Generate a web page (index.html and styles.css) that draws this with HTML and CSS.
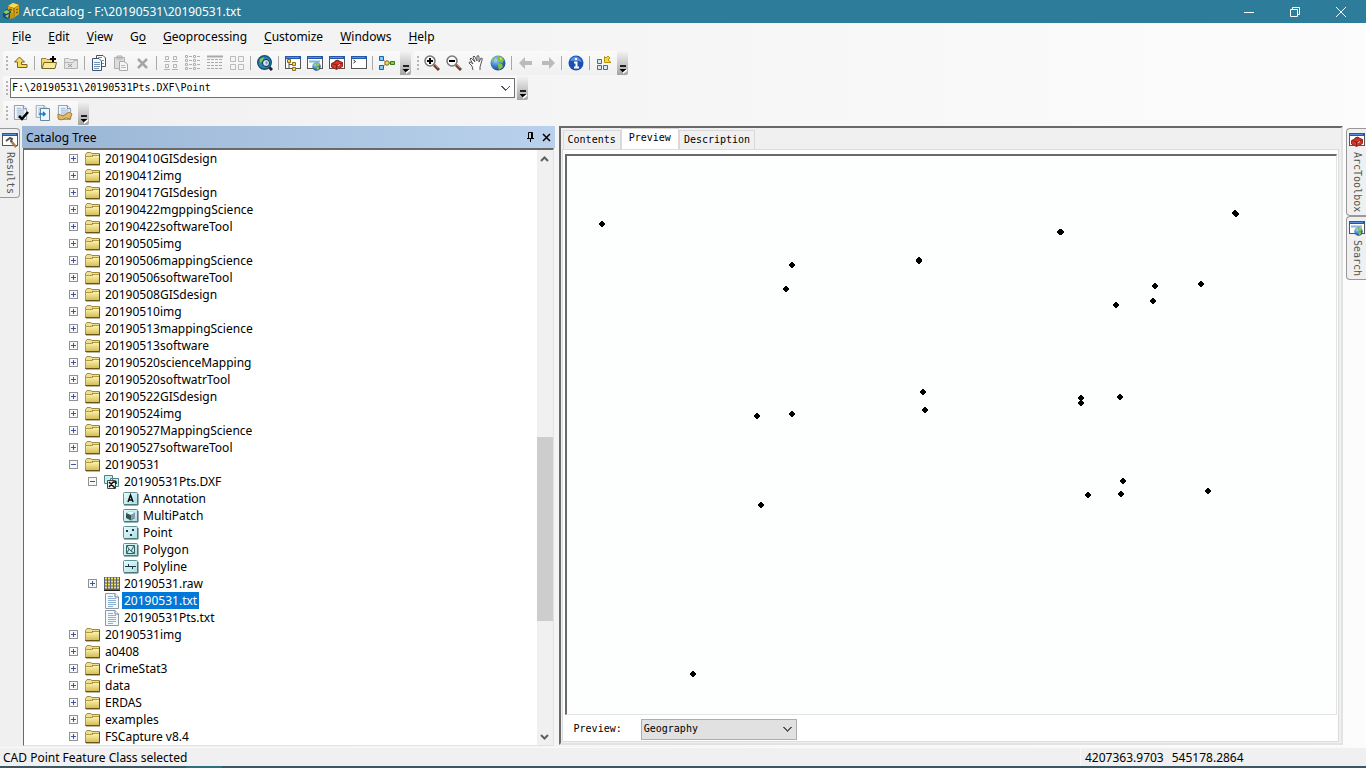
FILE: index.html
```html
<!DOCTYPE html>
<html lang="en">
<head>
<meta charset="utf-8">
<title>ArcCatalog - F:\20190531\20190531.txt</title>
<link rel="stylesheet" href="styles.css">
</head>
<body>
<svg class="defs" aria-hidden="true">
  <defs>
    <linearGradient id="g-folder" x1="0" y1="0" x2="0" y2="1"><stop offset="0" stop-color="#fff6b0"/><stop offset="1" stop-color="#d3bb55"/></linearGradient>
    <linearGradient id="g-cad" x1="0" y1="0" x2="1" y2="1"><stop offset="0" stop-color="#e9fcfd"/><stop offset="1" stop-color="#a9dfe4"/></linearGradient>
    <radialGradient id="g-globe" cx=".35" cy=".3" r=".8"><stop offset="0" stop-color="#a9d4ff"/><stop offset=".5" stop-color="#3f7fd0"/><stop offset="1" stop-color="#123a80"/></radialGradient>
    <symbol id="folder" viewBox="0 0 16 14"><path d="M.5 2.500L2 .5H5.500L7 1.500H14.500V12.500H.5z" fill="#efdf94" stroke="#a18a38"/><path d="M7 3.500H14" stroke="#8d7630"/><path d="M.5 4.500H7.500L8.500 3.500H14.500V12.500H.5z" fill="url(#g-folder)" stroke="#b09a48"/><path d="M.5 12.500H14.500V2" fill="none" stroke="#665418"/><path d="M1 13.500H15" stroke="#bdb9a8"/></symbol>
    <symbol id="plus" viewBox="0 0 9 9"><rect x=".5" y=".5" width="8" height="8" fill="#f8f8f8" stroke="#919191"/><path d="M2 4.500H7M4.500 2V7" stroke="#3b57a5"/></symbol>
    <symbol id="minus" viewBox="0 0 9 9"><rect x=".5" y=".5" width="8" height="8" fill="#f8f8f8" stroke="#919191"/><path d="M2 4.500H7" stroke="#3b57a5"/></symbol>
    <symbol id="cadbox" viewBox="0 0 16 14"><rect x=".5" y=".5" width="14" height="12" rx="1" fill="url(#g-cad)" stroke="#5f9196"/><path d="M1 13H15V2" fill="none" stroke="#376367"/></symbol>
    <symbol id="doc" viewBox="0 0 16 16"><path d="M1.500.5H11L14.500 4V15.500H1.500z" fill="#f3f8fd" stroke="#8d99a5"/><path d="M11 .5V4H14.500" fill="#fff" stroke="#717d88"/><path d="M4 3.500H9M4 5.500H12M4 7.500H12M4 9.500H12M4 11.500H12M4 13.500H9" stroke="#8eb1d2"/></symbol>
    <symbol id="window" viewBox="0 0 16 16"><rect x=".5" y="1.500" width="15" height="12" fill="#fff" stroke="#555"/><path d="M0 2.500H16" stroke="#2459aa" stroke-width="3"/><path d="M1 2.500H14" stroke="#5b8ed8"/></symbol>
    <symbol id="toolbox" viewBox="0 0 16 16"><use href="#window"/><path d="M2.500 8.500L9 5.500 13.500 7.500V11.500L7.500 14.500 2.500 12z" fill="#d93529" stroke="#a3241c"/><path d="M3 8.500L7.500 10 13.500 8M7.500 10V14" stroke="#84231b" fill="none"/><path d="M6 7.500V6L9 5 10 6.500" fill="none" stroke="#722"/><path d="M9 10l2-1v1l-2 1z" fill="#f4d0c0"/></symbol>
    <symbol id="globe" viewBox="0 0 16 16"><circle cx="8" cy="8" r="7.500" fill="url(#g-globe)"/><path d="M8 1L12 2 14 5 12 8 8 6 7 4zM8 8L12 9 13 12 9 15 8 11zM2 4L5 2 4 5 2 7z" fill="#83c43c"/><path d="M10 2L12 4 10 5" fill="#e2e66c"/></symbol>
    <symbol id="searchwin" viewBox="0 0 16 16"><use href="#window"/><path d="M2 6.500H13" stroke="#83b5d7" stroke-width="2"/><use href="#globe" x="5" y="7" width="9" height="9"/></symbol>
    <symbol id="overflow" viewBox="0 0 10 24"><path d="M2 14H8V16H2z" fill="#222"/><path d="M1.500 18H8.500L5 21.500z" fill="#000"/><path d="M5 21L9 18V20L5 23z" fill="#fff"/></symbol>
    <symbol id="mag" viewBox="0 0 16 16"><path d="M10 10L15 15" stroke="#6e4030" stroke-width="3"/><path d="M10 9L14 13" stroke="#b98270"/><circle cx="6" cy="6" r="5" fill="#f8f8f8" stroke="#777" stroke-width="1.500"/></symbol>
    <path id="pt" d="M2 0H4V1H5V2H6V4H5V5H4V6H2V5H1V4H0V2H1V1H2z"/>
  </defs>
</svg>
<div class="app">
<header class="title">
  <svg width="18" height="18" viewBox="0 0 18 18"><path d="M6 3L11 0 17 2V11L12 15 6 12z" fill="#d8a912"/><path d="M6 3L12 5 17 2M12 5V14" stroke="#806009" fill="none"/><path d="M11 0L17 2 12 5 6 3z" fill="#f8dc54"/><path d="M7 6L10 7M14 7L16 6M14 10L16 9" stroke="#5d4504"/><path d="M1 9L5 6 9 8V14L5 16 1 14z" fill="#174b75"/><path d="M1 9L5 7 8 9 4 11zM3 13L7 11 6 15z" fill="#8fcb6a"/><path d="M8 10H12V15L8 16z" fill="#c8960d"/></svg>
  <h1>ArcCatalog - F:\20190531\20190531.txt</h1>
  <div class="winbtns">
    <button aria-label="Minimize"><svg width="12" height="12"><path d="M1 6.500H11" stroke="#fff"/></svg></button>
    <button aria-label="Restore"><svg width="12" height="12"><path d="M1.500 3.500H8.500V10.500H1.500zM3.500 3V1.500H10.500V8.500H9" fill="none" stroke="#fff"/></svg></button>
    <button aria-label="Close"><svg width="12" height="12"><path d="M1 1L11 11M11 1L1 11" stroke="#fff"/></svg></button>
  </div>
</header>
<nav class="menu">
  <button><u>F</u>ile</button><button><u>E</u>dit</button><button><u>V</u>iew</button><button>G<u>o</u></button><button><u>G</u>eoprocessing</button><button><u>C</u>ustomize</button><button><u>W</u>indows</button><button><u>H</u>elp</button>
</nav>
<div class="bars">
<div class="bar">
  <div class="strip">
    <i class="grip"></i>
    <button aria-label="Up One Level"><svg><path d="M6.500 2L1.500 7H4.500V12.500H14V9.500H8.500V7H11.500z" fill="#f4da5d" stroke="#7c6518"/></svg></button><i class="sep"></i>
    <button aria-label="Connect To Folder"><svg><path d="M.5 3.500H5L6 4.500H12V13H.5z" fill="#f0dc77" stroke="#9c842e"/><path d="M1 13.500L3 7.500H15.500L14 13.500z" fill="#f7eaa0" stroke="#77621c"/><path d="M9 4H15M12 1V7" stroke="#000" stroke-width="2"/></svg></button>
    <button disabled aria-label="Disconnect Folder"><svg><path d="M1.500 3.500H6L7 4.500H14.500V13.500H1.500zM1.500 7.500H10L11 5.500H14" fill="#e5e5e5" stroke="#b4b4b4"/><path d="M5 9L9 12M9 9L5 12" stroke="#999"/></svg></button><i class="sep"></i>
    <button aria-label="Copy"><svg><path d="M5.500.5H12L14.500 3V11.500H5.500z" fill="#fff" stroke="#3e5369"/><path d="M1.500 3.500H8L10.500 6V15.500H1.500z" fill="#f5faff" stroke="#3e5369"/><path d="M3 7.500H9M3 9.500H9M3 11.500H9M3 13.500H8M7 2.500H11M11 5.500H13M11 8.500H13" stroke="#6f93b6"/></svg></button>
    <button disabled aria-label="Paste"><svg><path d="M1.500 2.500H11.500V13.500H1.500zM4 1H9V4H4z" fill="#ddd" stroke="#b0b0b0"/><path d="M6.500 6.500H11L14.500 9V15.500H6.500z" fill="#f4f4f4" stroke="#aaa"/><path d="M8 10.500H12M8 12.500H13" stroke="#bbb"/></svg></button>
    <button disabled aria-label="Delete"><svg><path d="M3 4L12 13M12 4L3 13" stroke="#a5a5a5" stroke-width="2.500"/></svg></button><i class="sep"></i>
    <button disabled aria-label="Large Icons"><svg><path d="M2.500 1.500H5.500V4.500H2.500zM10.500 1.500H13.500V4.500H10.500zM2.500 9.500H5.500V12.500H2.500zM10.500 9.500H13.500V12.500H10.500zM1 6.500H7M9 6.500H15M1 14.500H7M9 14.500H15" fill="none" stroke="#b4b4b4"/></svg></button>
    <button disabled aria-label="List"><svg><path d="M.5.5H2.500V2.500H.5zM8.500.5H10.500V2.500H8.500zM.5 4.500H2.500V6.500H.5zM8.500 4.500H10.500V6.500H8.500zM.5 8.500H2.500V10.500H.5zM8.500 8.500H10.500V10.500H8.500zM.5 12.500H2.500V14.500H.5zM8.500 12.500H10.500V14.500H8.500zM4 1.500H7M12 1.500H15M4 5.500H7M12 5.500H15M4 9.500H7M12 9.500H15M4 13.500H7M12 13.500H15" fill="none" stroke="#b0b0b0"/></svg></button>
    <button disabled aria-label="Details"><svg><path d="M0 1.500H16" stroke="#aaa" stroke-width="2"/><path d="M0 4.500H16M0 7.500H16M0 10.500H16M0 13.500H16" stroke="#aaa" stroke-dasharray="3 1"/></svg></button>
    <button disabled aria-label="Thumbnails"><svg><path d="M1.500 1.500H6.500V6.500H1.500zM9.500 1.500H14.500V6.500H9.500zM1.500 9.500H6.500V14.500H1.500zM9.500 9.500H14.500V14.500H9.500z" fill="#f4f4f4" stroke="#bbb"/></svg></button><i class="sep"></i>
    <button aria-label="Launch ArcMap"><svg><path d="M10 10L15 15" stroke="#222" stroke-width="3"/><circle cx="7.500" cy="7.500" r="6.800" fill="#2884b5" stroke="#135276" stroke-width="1.400"/><circle cx="9" cy="8" r="3.500" fill="#d9eef5" stroke="#124"/><path d="M3 4L7 2 6 5 3 8z" fill="#8fc84a"/><path d="M8 7L10 6 11 8 9 10z" fill="#6aa8c8"/></svg></button><i class="sep"></i>
    <button aria-label="Catalog Tree"><svg><use href="#window" width="16" height="16"/><path d="M4 5V13M4 9.500H9M4 13.500H9" stroke="#555" fill="none"/><path d="M2.500 4.500H5.500V7.500H2.500zM7.500 7.500H10.500V10.500H7.500zM7.500 12.500H10.500V15.500H7.500z" fill="#f6d64c" stroke="#8b711e"/></svg></button>
    <button aria-label="Search Window"><svg><use href="#searchwin" width="16" height="16"/></svg></button>
    <button aria-label="ArcToolbox Window"><svg><use href="#toolbox" width="16" height="16"/></svg></button>
    <button aria-label="Python Window"><svg><use href="#window" width="16" height="16"/><path d="M2.500 5L4.500 6.500 2.500 8" fill="none" stroke="#222"/></svg></button><i class="sep"></i>
    <button aria-label="ModelBuilder"><svg><path d="M3 4L8 8 3 12M8 8H13" stroke="#777" fill="none"/><path d="M.5 1.500H4.500V5.500H.5zM.5 10.500H4.500V14.500H.5z" fill="#82c8f4" stroke="#1763a7"/><circle cx="8" cy="8" r="2.200" fill="#f8d549" stroke="#856619"/><path d="M11.500 6.500H15.500V9.500H11.500z" fill="#82d44c" stroke="#2e7c20"/></svg></button>
    <button class="more" aria-label="Toolbar Options"><svg><use href="#overflow"/></svg></button>
  </div>
  <div class="strip">
    <i class="grip"></i>
    <button aria-label="Zoom In"><svg><use href="#mag" width="16" height="16"/><path d="M3 6H9M6 3V9" stroke="#000" stroke-width="2"/></svg></button>
    <button aria-label="Zoom Out"><svg><use href="#mag" width="16" height="16"/><path d="M3 6H9" stroke="#000" stroke-width="2"/></svg></button>
    <button aria-label="Pan"><svg><path d="M5 15L4 11 1 8Q1 6 3 7.500L5 9 2 4Q3 2 4 4L7 7 5 2Q6 0 7 2L9 6 9 1Q11 0 11 2V7L13 3Q15 3 14 5L12 12 12 15" fill="#fff" stroke="#555"/></svg></button>
    <button aria-label="Full Extent"><svg><use href="#globe" width="16" height="16"/></svg></button><i class="sep"></i>
    <button disabled aria-label="Back"><svg><path d="M1 8L7 2V6H14V10H7V14z" fill="#bbb"/></svg></button>
    <button disabled aria-label="Forward"><svg><path d="M15 8L9 2V6H2V10H9V14z" fill="#bbb"/></svg></button><i class="sep"></i>
    <button aria-label="Identify"><svg><circle cx="8" cy="8" r="7.500" fill="#1c50b0"/><path d="M2 6Q4 1 8 1.500T14 7Q8 5 2 6" fill="#5c91dd"/><path d="M8 3V5M6 7.500H8.500V12M6 12.500H11" stroke="#fff" stroke-width="2" fill="none"/></svg></button><i class="sep"></i>
    <button aria-label="Create Thumbnail"><svg><path d="M1.500 4.500H5.500V8.500H1.500zM1.500 10.500H5.500V14.500H1.500zM7.500 10.500H11.500V14.500H7.500z" fill="#d9e8f3" stroke="#53697a"/><path d="M8.500 1.500L10 3 12 1 14 3 12 5 15 7.500H8.500z" fill="#f5d934" stroke="#b99307"/></svg></button>
    <button class="more" aria-label="Toolbar Options"><svg><use href="#overflow"/></svg></button>
  </div>
</div>
<div class="bar">
  <div class="strip"><i class="grip"></i>
    <select class="location" aria-label="Location"><option>F:\20190531\20190531Pts.DXF\Point</option></select>
    <button class="more" aria-label="Toolbar Options"><svg><use href="#overflow"/></svg></button>
  </div>
</div>
<div class="bar">
  <div class="strip"><i class="grip"></i>
    <button aria-label="Validate Metadata"><svg><use href="#doc" width="15" height="15"/><path d="M6 11L9 14 15 7" fill="none" stroke="#000" stroke-width="2.500"/></svg></button>
    <button aria-label="Export Metadata"><svg><use href="#doc" width="13" height="13"/><path d="M5.500 3.500H14.500V15.500H5.500z" fill="#eff7fe" stroke="#5e87a8"/><path d="M4 9H10M8 7L10 9 8 11" fill="none" stroke="#177bc4" stroke-width="1.500"/></svg></button>
    <button aria-label="Edit Metadata"><svg><use href="#doc" width="15" height="15"/><path d="M1 9L6 11 12 7 15 9 13 14 9 13 4 15 1 13z" fill="#e0ba6a" stroke="#a77c32"/></svg></button>
    <button class="more" aria-label="Toolbar Options"><svg><use href="#overflow"/></svg></button>
  </div>
</div>
</div>
<main>
  <aside class="dock left"><button><svg><use href="#window" width="16" height="16"/><path d="M4 9L8 6 10 7 9 9 14 15" fill="none" stroke="#59544d" stroke-width="2"/><path d="M10 10L14 15" stroke="#c18251" stroke-width="2"/></svg><span>Results</span></button></aside>
  <section class="catalog">
    <div class="cap"><h2>Catalog Tree</h2>
      <button aria-label="Auto Hide"><svg width="9" height="10"><path d="M2.500 6V.5H6.500V6M5.500 1V6M1 6.500H8M4.500 7V10" fill="none" stroke="#000"/></svg></button>
      <button aria-label="Close"><svg width="9" height="9"><path d="M1 1L8 8M8 1L1 8" stroke="#000" stroke-width="1.500"/></svg></button></div>
    <div class="treebox">
      <ul class="tree">
        <li><svg class="tg"><use href="#plus"/></svg><svg class="ic"><use href="#folder"/></svg><span>20190410GISdesign</span></li>
        <li><svg class="tg"><use href="#plus"/></svg><svg class="ic"><use href="#folder"/></svg><span>20190412img</span></li>
        <li><svg class="tg"><use href="#plus"/></svg><svg class="ic"><use href="#folder"/></svg><span>20190417GISdesign</span></li>
        <li><svg class="tg"><use href="#plus"/></svg><svg class="ic"><use href="#folder"/></svg><span>20190422mgppingScience</span></li>
        <li><svg class="tg"><use href="#plus"/></svg><svg class="ic"><use href="#folder"/></svg><span>20190422softwareTool</span></li>
        <li><svg class="tg"><use href="#plus"/></svg><svg class="ic"><use href="#folder"/></svg><span>20190505img</span></li>
        <li><svg class="tg"><use href="#plus"/></svg><svg class="ic"><use href="#folder"/></svg><span>20190506mappingScience</span></li>
        <li><svg class="tg"><use href="#plus"/></svg><svg class="ic"><use href="#folder"/></svg><span>20190506softwareTool</span></li>
        <li><svg class="tg"><use href="#plus"/></svg><svg class="ic"><use href="#folder"/></svg><span>20190508GISdesign</span></li>
        <li><svg class="tg"><use href="#plus"/></svg><svg class="ic"><use href="#folder"/></svg><span>20190510img</span></li>
        <li><svg class="tg"><use href="#plus"/></svg><svg class="ic"><use href="#folder"/></svg><span>20190513mappingScience</span></li>
        <li><svg class="tg"><use href="#plus"/></svg><svg class="ic"><use href="#folder"/></svg><span>20190513software</span></li>
        <li><svg class="tg"><use href="#plus"/></svg><svg class="ic"><use href="#folder"/></svg><span>20190520scienceMapping</span></li>
        <li><svg class="tg"><use href="#plus"/></svg><svg class="ic"><use href="#folder"/></svg><span>20190520softwatrTool</span></li>
        <li><svg class="tg"><use href="#plus"/></svg><svg class="ic"><use href="#folder"/></svg><span>20190522GISdesign</span></li>
        <li><svg class="tg"><use href="#plus"/></svg><svg class="ic"><use href="#folder"/></svg><span>20190524img</span></li>
        <li><svg class="tg"><use href="#plus"/></svg><svg class="ic"><use href="#folder"/></svg><span>20190527MappingScience</span></li>
        <li><svg class="tg"><use href="#plus"/></svg><svg class="ic"><use href="#folder"/></svg><span>20190527softwareTool</span></li>
        <li><svg class="tg"><use href="#minus"/></svg><svg class="ic"><use href="#folder"/></svg><span>20190531</span></li>
        <li class="l2"><svg class="tg"><use href="#minus"/></svg><svg class="ic" viewBox="0 0 16 14"><path d="M.5.5H8.500V8.500H.5zM6.500 3.500H14.500V11.500H6.500z" fill="#c9f0f0" stroke="#4f8588"/><path d="M3.500 5.500H11.500V13.500H3.500z" fill="#eee" stroke="#444"/><path d="M5 7L11 13M9 7L5 12M9 7H12V9" stroke="#111" stroke-width="1.500" fill="none"/></svg><span>20190531Pts.DXF</span></li>
        <li class="l3"><i class="tg"></i><svg class="ic" viewBox="0 0 16 14"><use href="#cadbox"/><path d="M5 10L7.500 3L10 10M6 8H9" fill="none" stroke="#111" stroke-width="1.500"/></svg><span>Annotation</span></li>
        <li class="l3"><i class="tg"></i><svg class="ic" viewBox="0 0 16 14"><use href="#cadbox"/><path d="M3 4L8 2 12 4V9L8 11.500 3 9z" fill="#355"/><path d="M3 4L8 2 12 4 8 6z" fill="#dff"/><path d="M8 6L12 4V9L8 11.500z" fill="#89a"/></svg><span>MultiPatch</span></li>
        <li class="l3"><i class="tg"></i><svg class="ic" viewBox="0 0 16 14"><use href="#cadbox"/><path d="M3 4H5V6H3zM9 3H11V5H9zM7 8H9V10H7z" fill="#234"/></svg><span>Point</span></li>
        <li class="l3"><i class="tg"></i><svg class="ic" viewBox="0 0 16 14"><use href="#cadbox"/><path d="M3.500 2.500H11.500V10.500H3.500zM4 10L6 6 8 8 11 3M6 6L4 3M8 8L11 10" fill="none" stroke="#345d62"/></svg><span>Polygon</span></li>
        <li class="l3"><i class="tg"></i><svg class="ic" viewBox="0 0 16 14"><use href="#cadbox"/><path d="M2 6.500H13M5.500 4V7M9.500 6V9" stroke="#234"/></svg><span>Polyline</span></li>
        <li class="l2"><svg class="tg"><use href="#plus"/></svg><svg class="ic" viewBox="0 0 16 14"><path d="M0 0H16V14H0z" fill="#555f78"/><path d="M1 1.500H16M1 4.500H16M1 7.500H16M1 10.500H16" stroke="#f2df66" stroke-width="2" stroke-dasharray="2 1"/><path d="M0 13.500H16" stroke="#222"/></svg><span>20190531.raw</span></li>
        <li class="l2"><i class="tg"></i><svg class="ic tall"><use href="#doc"/></svg><span class="sel">20190531.txt</span></li>
        <li class="l2"><i class="tg"></i><svg class="ic tall"><use href="#doc"/></svg><span>20190531Pts.txt</span></li>
        <li><svg class="tg"><use href="#plus"/></svg><svg class="ic"><use href="#folder"/></svg><span>20190531img</span></li>
        <li><svg class="tg"><use href="#plus"/></svg><svg class="ic"><use href="#folder"/></svg><span>a0408</span></li>
        <li><svg class="tg"><use href="#plus"/></svg><svg class="ic"><use href="#folder"/></svg><span>CrimeStat3</span></li>
        <li><svg class="tg"><use href="#plus"/></svg><svg class="ic"><use href="#folder"/></svg><span>data</span></li>
        <li><svg class="tg"><use href="#plus"/></svg><svg class="ic"><use href="#folder"/></svg><span>ERDAS</span></li>
        <li><svg class="tg"><use href="#plus"/></svg><svg class="ic"><use href="#folder"/></svg><span>examples</span></li>
        <li><svg class="tg"><use href="#plus"/></svg><svg class="ic"><use href="#folder"/></svg><span>FSCapture v8.4</span></li>
      </ul>
      <div class="scroll">
        <button aria-label="Scroll up"><svg width="9" height="6"><path d="M1 5L4.500 1.500 8 5" fill="none" stroke="#606060" stroke-width="2"/></svg></button>
        <i class="before"></i><i class="thumb"></i><i class="after"></i>
        <button aria-label="Scroll down"><svg width="9" height="6"><path d="M1 1L4.500 4.500 8 1" fill="none" stroke="#606060" stroke-width="2"/></svg></button>
      </div>
    </div>
  </section>
  <section class="view">
    <div class="tabs" role="tablist"><button role="tab">Contents</button><button role="tab" class="on" aria-selected="true">Preview</button><button role="tab">Description</button></div>
    <div class="panel">
      <div class="map">
        <svg width="100%" height="100%" role="img" aria-label="Point features">
          <use href="#pt" x="32" y="65"/><use href="#pt" x="222" y="106"/><use href="#pt" x="216" y="130"/><use href="#pt" x="349" y="102"/><use href="#pt" x="349" y="101"/><use href="#pt" x="490" y="73"/><use href="#pt" x="491" y="73"/><use href="#pt" x="665" y="54"/><use href="#pt" x="666" y="55"/><use href="#pt" x="585" y="127"/><use href="#pt" x="631" y="125"/><use href="#pt" x="583" y="142"/><use href="#pt" x="546" y="146"/><use href="#pt" x="187" y="257"/><use href="#pt" x="222" y="255"/><use href="#pt" x="353" y="233"/><use href="#pt" x="355" y="251"/><use href="#pt" x="511" y="239"/><use href="#pt" x="511" y="244"/><use href="#pt" x="550" y="238"/><use href="#pt" x="553" y="322"/><use href="#pt" x="551" y="335"/><use href="#pt" x="518" y="336"/><use href="#pt" x="638" y="332"/><use href="#pt" x="191" y="346"/><use href="#pt" x="123" y="515"/>
        </svg>
      </div>
      <div class="opts"><label for="mode">Preview:</label><select id="mode"><option>Geography</option></select></div>
    </div>
  </section>
  <aside class="dock right">
    <button><svg><use href="#toolbox" width="16" height="16"/></svg><span>ArcToolbox</span></button>
    <button><svg><use href="#searchwin" width="16" height="16"/></svg><span>Search</span></button>
  </aside>
</main>
<footer><span class="msg">CAD Point Feature Class selected</span><span class="coords"><span>4207363.9703</span><span>545178.2864</span></span></footer>
<div class="edge"><i></i></div>
</div>
</body>
</html>
```
FILE: styles.css
```css
* { box-sizing: border-box; }
body { margin: 0; font: 12px/17px "Noto Sans", sans-serif; color: #000; }
button { margin: 0; padding: 0; border: 0; background: none; font: inherit; color: inherit; }
svg { display: block; flex: none; }
.defs { position: absolute; width: 0; height: 0; }
.app { height: 100vh; display: flex; flex-direction: column; background: linear-gradient(90deg, #f0f0f0, #fcfcfc); }

.title { flex: none; height: 23px; display: flex; align-items: center; padding: 0 2px; gap: 3px; background: #2d7d9a; color: #fff; }
.title h1 { flex: 1; margin: 0; font-size: 12px; font-weight: 400; }
.winbtns { display: flex; }
.winbtns button { width: 46px; height: 22px; display: flex; align-items: center; justify-content: center; }

.menu { flex: none; height: 28px; display: flex; align-items: center; gap: 1px; padding: 0 4px 2px; }
.menu button { padding: 0 8px; }
.menu u { text-underline-offset: 2px; }

.bars { flex: none; display: flex; flex-direction: column; gap: 1px; padding-bottom: 1px; }
.bar { display: flex; gap: 3px; padding-left: 3px; height: 24px; }
.strip { display: flex; align-items: center; border-radius: 2px; background: linear-gradient(#fafafa, #f0f0f0); }
.strip button { width: 22px; height: 22px; display: flex; align-items: center; justify-content: center; }
.strip svg { width: 16px; height: 16px; }
.grip { width: 7px; height: 15px; background: repeating-linear-gradient(#b4b4b4 0 2px, transparent 2px 4px) 3px 0 / 2px 100% no-repeat; }
.sep { width: 6px; height: 14px; background: linear-gradient(#a8a8a8, #a8a8a8) 2px 0 / 1px 100% no-repeat; }
.strip .more { width: 11px; height: 24px; margin-left: 2px; background: linear-gradient(#f4f4f4, #a4a4a4); border-radius: 0 2px 2px 0; }
.strip .more svg { width: 10px; height: 24px; }

select { appearance: none; border-radius: 0; font: 10px/14px "DejaVu Sans Mono", monospace; color: #000; }
.location { width: 505px; height: 20px; padding: 0 1px; border: 1px solid #707070; background: #fff; }
.location, #mode { background-image: linear-gradient(45deg, transparent 45%, #555 45% 60%, transparent 60%), linear-gradient(-45deg, transparent 45%, #555 45% 60%, transparent 60%); background-size: 5px 5px; background-repeat: no-repeat; background-position: right 8px center, right 4px center; }

main { flex: 1; min-height: 0; display: flex; }
.dock { flex: none; display: flex; flex-direction: column; padding-top: 2px; font: 10px/12px "DejaVu Sans Mono", monospace; color: #555; }
.dock button { display: flex; flex-direction: column; align-items: center; gap: 4px; padding: 3px 1px; border: 1px solid #999; background: #f0f0f0; }
.dock svg { width: 16px; height: 16px; }
.dock span { writing-mode: vertical-rl; }
.left { width: 22px; background: #f0f0f0; }
.left button { width: 20px; border-left: 0; border-radius: 0 4px 4px 0; }
.right { width: 23px; padding-left: 3px; }
.right button { border-right: 0; border-radius: 4px 0 0 4px; }

.catalog { flex: 533 1 0; min-width: 0; display: flex; flex-direction: column; }
.cap { flex: none; height: 22px; display: flex; align-items: center; gap: 7px; padding: 0 4px; background: linear-gradient(90deg, #9ab5d5, #b9d1ec); }
.cap h2 { flex: 1; margin: 0; font-size: 12px; font-weight: 400; }
.treebox { flex: 1; min-height: 0; margin: 0 1px 1px; display: flex; border: 1px solid #e3e3e3; border-top: 2px solid #696969; border-left-color: #696969; background: #fff; }
.tree { flex: 1; margin: 0; padding: 0; list-style: none; overflow: hidden; }
.tree li { height: 17px; display: flex; align-items: center; padding-left: 45px; white-space: nowrap; }
.tree .l2 { padding-left: 64px; }
.tree .l3 { padding-left: 83px; }
.tg { flex: none; width: 9px; height: 9px; margin-right: 7px; }
.ic { width: 16px; height: 14px; margin-right: 2px; }
.ic.tall { height: 16px; }
.tree span { padding: 0 2px; }
.tree .sel { background: #0078d7; color: #fff; }
.scroll { flex: none; width: 16px; display: flex; flex-direction: column; background: #f0f0f0; }
.scroll button { height: 17px; display: flex; align-items: center; justify-content: center; }
.before { flex: 270; }
.thumb { flex: 185; background: #cdcdcd; }
.after { flex: 107; }

.view { flex: 784 1 0; min-width: 0; margin: 0 0 2px 4px; display: flex; flex-direction: column; background: #f0f0f0; border: 2px solid #696969; border-right-color: #e3e3e3; border-bottom-color: #e3e3e3; }
.catalog { flex-grow: 535; }
.tabs { flex: none; height: 21px; display: flex; align-items: flex-end; padding-left: 2px; font: 10px/16px "DejaVu Sans Mono", monospace; }
.tabs button { height: 19px; padding: 0 4px; border: 1px solid #d9d9d9; border-bottom: 0; }
.tabs .on { height: 21px; padding: 0 7px 3px; background: #fff; }
.panel { flex: 1; min-height: 0; display: flex; flex-direction: column; margin: 0 2px 1px 1px; padding: 4px 1px 0 2px; border: 1px solid #dcdcdc; background: #fff; }
.map { flex: 1; min-height: 0; border: 2px solid #696969; border-right: 1px solid #e3e3e3; border-bottom: 1px solid #e3e3e3; background: #fdfefe; }
.opts { flex: none; height: 26px; display: flex; align-items: center; gap: 19px; padding: 2px 0 0 9px; font: 10px/14px "DejaVu Sans Mono", monospace; }
#mode { width: 156px; height: 21px; padding: 0 2px; border: 1px solid #adadad; background-color: #e1e1e1; }

footer { flex: none; height: 19px; display: flex; align-items: center; padding: 1px 0 0 3px; background: #f0f0f0; border-top: 1px solid #fafafa; }
.msg { flex: 1; }
.coords { width: 286px; padding-left: 4px; display: flex; gap: 8px; border-left: 1px solid #fafafa; }
.edge { flex: none; height: 2px; display: flex; padding-left: 186px; background: #3d5663; }
.edge i { width: 36px; background: #2d7080; }
```
